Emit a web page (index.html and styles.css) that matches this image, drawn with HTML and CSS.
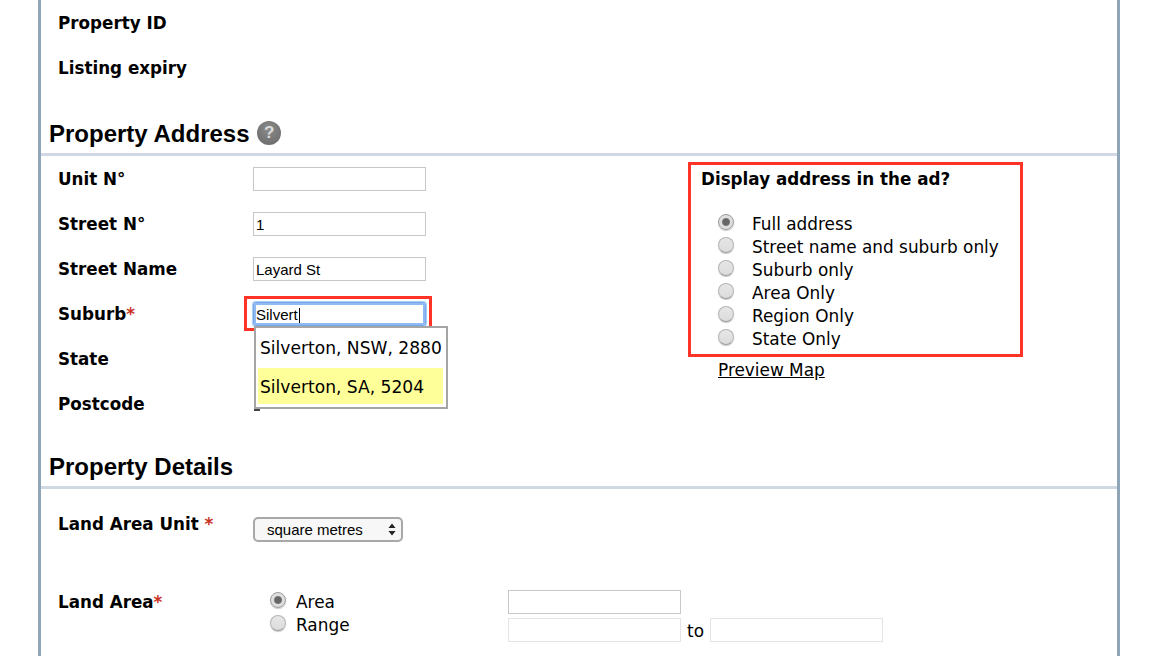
FILE: index.html
```html
<!DOCTYPE html>
<html lang="en">
<head>
<meta charset="utf-8">
<title>Property listing</title>
<link rel="stylesheet" href="styles.css">
</head>
<body>
<main class="frame">
  <section class="meta">
    <div class="row"><span class="label">Property ID</span></div>
    <div class="row"><span class="label">Listing expiry</span></div>
  </section>

  <h2 class="heading heading-address">Property Address <span class="help">?</span></h2>
  <section class="address">
    <div class="fields">
      <div class="row"><label class="label">Unit N°</label><input class="text" type="text"></div>
      <div class="row"><label class="label">Street N°</label><input class="text" type="text" value="1"></div>
      <div class="row"><label class="label">Street Name</label><input class="text" type="text" value="Layard St"></div>
      <div class="row row-suburb">
        <label class="label">Suburb<span class="req">*</span></label>
        <div class="suburb">
          <input class="text focus" type="text" value="Silvert">
          <span class="caret"></span>
          <span class="callout"></span>
          <ul class="suggest">
            <li>Silverton, NSW, 2880</li>
            <li class="active">Silverton, SA, 5204</li>
          </ul>
        </div>
      </div>
      <div class="row"><label class="label">State</label></div>
      <div class="row"><label class="label">Postcode</label><span class="stub"></span></div>
    </div>
    <div class="display">
      <div class="panel">
        <div class="panel-title">Display address in the ad?</div>
        <ul class="radios">
          <li><input class="radio" type="radio" name="disp" checked><span>Full address</span></li>
          <li><input class="radio" type="radio" name="disp"><span>Street name and suburb only</span></li>
          <li><input class="radio" type="radio" name="disp"><span>Suburb only</span></li>
          <li><input class="radio" type="radio" name="disp"><span>Area Only</span></li>
          <li><input class="radio" type="radio" name="disp"><span>Region Only</span></li>
          <li><input class="radio" type="radio" name="disp"><span>State Only</span></li>
        </ul>
      </div>
      <a class="preview" href="#">Preview Map</a>
    </div>
  </section>

  <h2 class="heading heading-details">Property Details</h2>
  <section class="details">
    <div class="row row-unit">
      <label class="label">Land Area Unit <span class="req">*</span></label>
      <div class="select-wrap">
        <select class="select"><option>square metres</option></select>
        <svg class="select-arrows" width="8" height="13" viewBox="0 0 8 13"><path d="M4 0.5 7.5 5H.5zM4 12.5 .5 8h7z" fill="#222"/></svg>
      </div>
    </div>
    <div class="row-area">
      <label class="label">Land Area<span class="req">*</span></label>
      <ul class="radios radios-area">
        <li><input class="radio" type="radio" name="area" checked><span>Area</span></li>
        <li><input class="radio" type="radio" name="area"><span>Range</span></li>
      </ul>
      <div class="area-inputs">
        <input class="text" type="text">
        <div class="range"><input class="text off" type="text" disabled><span class="range-to">to</span><input class="text off" type="text" disabled></div>
      </div>
    </div>
  </section>
</main>
</body>
</html>
```

FILE: styles.css
```css
html, body {
  margin: 0;
  height: 656px;
  overflow: hidden;
  background: #fff;
}
body {
  font-family: "DejaVu Sans", Verdana, sans-serif;
  font-size: 16.9px;
  color: #000;
}
ul { list-style: none; margin: 0; padding: 0; }
.frame {
  box-sizing: border-box;
  width: 1082px;
  height: 656px;
  margin-left: 38px;
  border-left: 3px solid #8fa5b8;
  border-right: 3px solid #8fa5b8;
  overflow: hidden;
}
.meta { padding-top: 1px; }
.meta .label { padding-bottom: 2px; }
.row {
  display: flex;
  align-items: center;
  height: 45px;
  padding-left: 17px;
  box-sizing: border-box;
}
.label {
  display: block;
  width: 195px;
  flex: none;
  font-weight: 700;
  font-size: 16.75px;
}
.address .label { padding-top: 1px; }
.req { color: #c8321e; }
.heading {
  margin: 0;
  padding-left: 8px;
  height: 26px;
  font-family: "Liberation Sans", Arial, sans-serif;
  font-weight: 700;
  font-size: 24px;
  line-height: 26px;
  border-bottom: 3px solid #d0d9e3;
  box-sizing: content-box;
}
.heading-address { margin-top: 30px; padding-bottom: 6px; }
.heading-details { margin-top: 0; padding-bottom: 6px; }
.help {
  display: inline-block;
  width: 24px;
  height: 24px;
  margin-left: 1px;
  border-radius: 50%;
  background: radial-gradient(circle at 50% 35%, #8c8c8c, #666);
  color: #dcdcdc;
  font-size: 17px;
  line-height: 24px;
  text-align: center;
  vertical-align: 4px;
}
.address { display: flex; height: 298px; }
.fields { width: 630px; flex: none; }
.text {
  box-sizing: border-box;
  width: 173px;
  height: 24px;
  margin: 0;
  padding: 1px 2px 0;
  border: 1px solid #c8c8c8;
  border-radius: 0;
  background: #fff;
  font-family: "Liberation Sans", Arial, sans-serif;
  font-size: 15px;
  color: #000;
  outline: none;
}
.text.off { border-color: #e4e4e4; }
.text.focus {
  border-color: #74a6ea;
  border-radius: 3px;
  box-shadow: inset 0 0 0 2px #8fbbf2, 0 0 1px 1px #a9cbf5;
}
.suburb { position: relative; width: 173px; height: 24px; }
.caret {
  position: absolute;
  left: 46px;
  top: 6px;
  width: 1px;
  height: 15px;
  background: #000;
}
.callout {
  position: absolute;
  left: -9px;
  top: -6px;
  width: 188px;
  height: 35px;
  box-sizing: border-box;
  border: 3px solid #ff3326;
}
.suggest {
  position: absolute;
  z-index: 2;
  left: 1px;
  top: 24px;
  width: 194px;
  height: 83px;
  box-sizing: border-box;
  border: 2px solid #a5a5a5;
  background: #fff;
  padding: 2px 3px 3px 2px;
  font-size: 17.1px;
}
.suggest li {
  height: 36px;
  line-height: 37px;
  padding-left: 2px;
  white-space: nowrap;
}
.suggest li.active { background: #ffff99; margin-top: 2px; line-height: 38px; }
.stub {
  position: absolute;
  left: 254px;
  top: 409px;
  width: 6px;
  height: 2px;
  background: #444;
}
.display { margin-top: 6px; margin-left: 17px; }
.panel {
  box-sizing: border-box;
  width: 335px;
  height: 195px;
  border: 3px solid #ff3326;
  padding: 4px 0 0 10px;
}
.panel-title { font-weight: 700; font-size: 16.75px; line-height: 20px; }
.radios { margin-top: 23px; padding-left: 17px; }
.radios li {
  display: flex;
  align-items: center;
  height: 23px;
}
.radio {
  appearance: none;
  -webkit-appearance: none;
  width: 16px;
  height: 16px;
  margin: 0 18px 4px 0;
  flex: none;
  border-radius: 50%;
  border: 1px solid #b5b5b5;
  border-bottom-color: #9a9a9a;
  background: linear-gradient(#e6e6e6, #dcdcdc);
  box-shadow: 0 1px 1px #c8c8c8;
  box-sizing: border-box;
}
.radio:checked {
  border-color: #9c9c9c;
  background: radial-gradient(circle, #666 0 3px, #777 3.5px, #dedede 4.5px);
}
.preview {
  display: inline-block;
  margin: 2px 0 0 30px;
  color: #000;
  text-decoration: underline;
  font-size: 16.9px;
  line-height: 22px;
}
.row-unit { height: 73px; align-items: flex-start; padding-top: 25px; }
.select-wrap { position: relative; margin-top: 3px; }
.select {
  appearance: none;
  -webkit-appearance: none;
  display: block;
  box-sizing: border-box;
  width: 150px;
  height: 25px;
  margin: 0;
  padding: 0 0 0 12px;
  border: 2px solid #a8a8a8;
  border-radius: 5px;
  background: #f7f7f7;
  font-family: "Liberation Sans", Arial, sans-serif;
  font-size: 15px;
  color: #000;
}
.select-arrows {
  position: absolute;
  right: 7px;
  top: 6px;
  pointer-events: none;
}
.row-area {
  display: flex;
  align-items: flex-start;
  padding: 28px 0 0 17px;
}
.row-area .label { line-height: 20px; padding-top: 2px; width: 212px; }
.radios-area { margin-top: 0; padding-left: 0; width: 238px; flex: none; }
.radios-area .radio { margin-right: 10px; }
.area-inputs { display: flex; flex-direction: column; gap: 4px; }
.range { display: flex; align-items: center; }
.range-to { width: 29px; padding-top: 2px; text-align: center; }
```
